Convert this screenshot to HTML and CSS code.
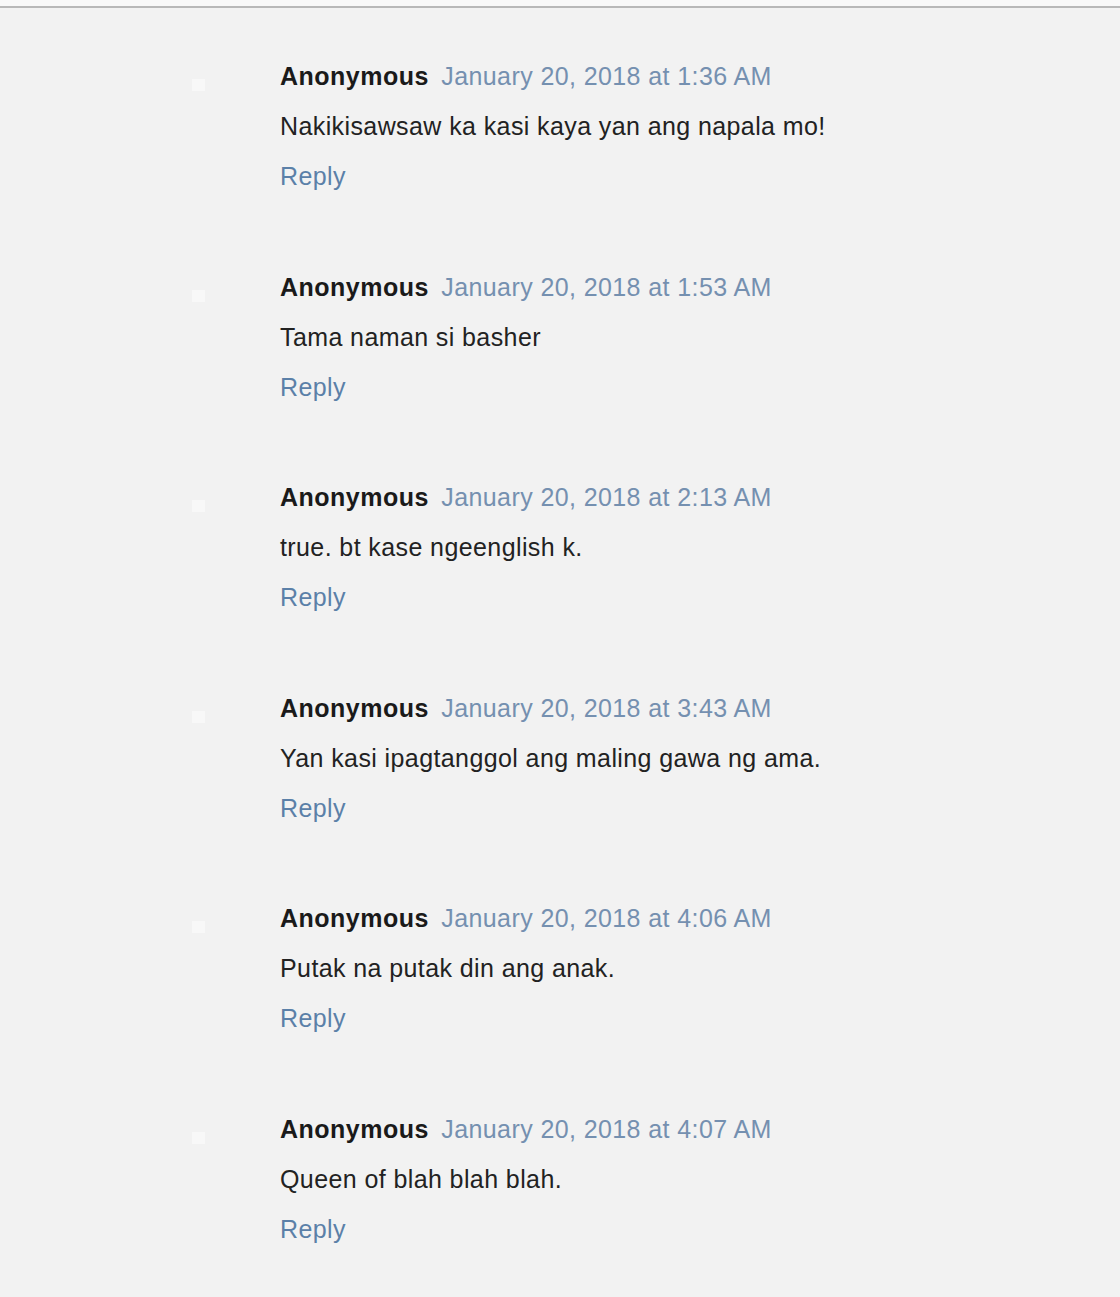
FILE: index.html
```html
<!DOCTYPE html>
<html lang="en">
<head>
    <meta charset="UTF-8">
    <meta name="viewport" content="width=device-width, initial-scale=1.0">
    <title>Comments</title>
    <link rel="stylesheet" href="styles.css">
</head>
<body>
    <div class="topbar"></div>
    <ol class="comments">
        <li class="comment">
            <div class="avatar"></div>
            <div class="comment-block">
                <div class="comment-header">
                    <span class="user">Anonymous</span>
                    <a class="datetime" href="#">January 20, 2018 at 1:36 AM</a>
                </div>
                <p class="comment-content">Nakikisawsaw ka kasi kaya yan ang napala mo!</p>
                <a class="reply" href="#">Reply</a>
            </div>
        </li>
        <li class="comment">
            <div class="avatar"></div>
            <div class="comment-block">
                <div class="comment-header">
                    <span class="user">Anonymous</span>
                    <a class="datetime" href="#">January 20, 2018 at 1:53 AM</a>
                </div>
                <p class="comment-content">Tama naman si basher</p>
                <a class="reply" href="#">Reply</a>
            </div>
        </li>
        <li class="comment">
            <div class="avatar"></div>
            <div class="comment-block">
                <div class="comment-header">
                    <span class="user">Anonymous</span>
                    <a class="datetime" href="#">January 20, 2018 at 2:13 AM</a>
                </div>
                <p class="comment-content">true. bt kase ngeenglish k.</p>
                <a class="reply" href="#">Reply</a>
            </div>
        </li>
        <li class="comment">
            <div class="avatar"></div>
            <div class="comment-block">
                <div class="comment-header">
                    <span class="user">Anonymous</span>
                    <a class="datetime" href="#">January 20, 2018 at 3:43 AM</a>
                </div>
                <p class="comment-content">Yan kasi ipagtanggol ang maling gawa ng ama.</p>
                <a class="reply" href="#">Reply</a>
            </div>
        </li>
        <li class="comment">
            <div class="avatar"></div>
            <div class="comment-block">
                <div class="comment-header">
                    <span class="user">Anonymous</span>
                    <a class="datetime" href="#">January 20, 2018 at 4:06 AM</a>
                </div>
                <p class="comment-content">Putak na putak din ang anak.</p>
                <a class="reply" href="#">Reply</a>
            </div>
        </li>
        <li class="comment">
            <div class="avatar"></div>
            <div class="comment-block">
                <div class="comment-header">
                    <span class="user">Anonymous</span>
                    <a class="datetime" href="#">January 20, 2018 at 4:07 AM</a>
                </div>
                <p class="comment-content">Queen of blah blah blah.</p>
                <a class="reply" href="#">Reply</a>
            </div>
        </li>
    </ol>
</body>
</html>
```

FILE: styles.css
```css
body{
    margin: 0;
    background-color: #f2f2f2;
    color: #222;
    font-family: "Liberation Sans", Arial, Helvetica, sans-serif;
    font-size: 25px;
    letter-spacing: 0.4px;
}
.topbar{
    height: 6px;
    background-color: #f8f8f8;
    border-bottom: 2px solid #b8b8b8;
}
.comments{
    list-style: none;
    margin: 0;
    padding: 43px 0 0 192px;
}
.comment{
    display: flex;
    gap: 75px;
    margin-bottom: 60.5px;
}
.avatar{
    width: 13px;
    height: 12px;
    margin-top: 28px;
    background-color: #f8f8f8;
}
.comment-block{
    display: flex;
    flex-direction: column;
    align-items: flex-start;
}
.comment-header{
    line-height: 50px;
    white-space: nowrap;
}
.user{
    font-weight: bold;
    color: #1a1a1a;
    letter-spacing: 0.5px;
    margin-right: 5px;
}
a{
    text-decoration: none;
}
.datetime{
    color: #7590b0;
}
.comment-content{
    margin: 0;
    line-height: 50px;
}
.reply{
    line-height: 50px;
    color: #5b80a8;
}
```
